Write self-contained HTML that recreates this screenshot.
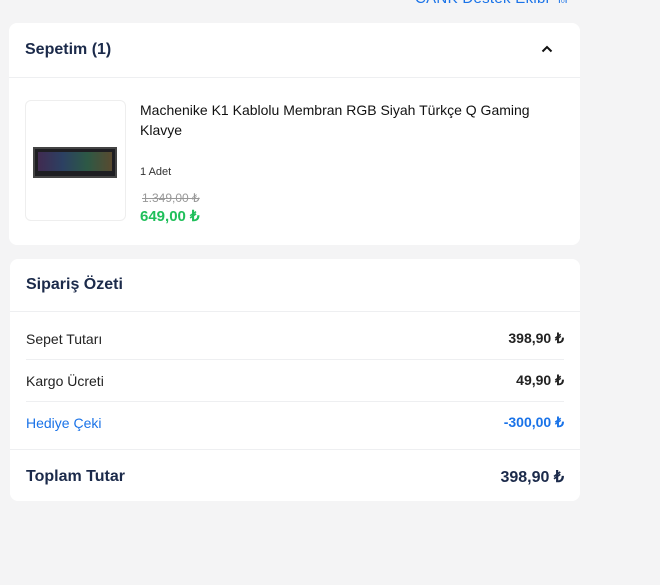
<!DOCTYPE html><html><head><meta charset="utf-8"><style>
body{margin:0;width:660px;height:585px;background:#f4f4f5;font-family:"Liberation Sans",sans-serif;position:relative;overflow:hidden}
.top{position:absolute;left:415px;top:-10px;color:#1a73e8;font-size:15px;letter-spacing:.3px}
.card{position:absolute;background:#fff;border-radius:8px}
.c1{left:9px;top:23px;width:571px;height:222px}
.c2{left:10px;top:259px;width:570px;height:242px}
.h{position:absolute;font-weight:bold;color:#1b2a4a}
.line{position:absolute;left:0;right:0;height:1px;background:#eeeff1}
.row{position:absolute;left:16px;right:16px;font-size:14px;color:#222;display:flex;justify-content:space-between;align-items:center}
</style></head><body>
<div class="top">CANK Destek Ekibi &nbsp;⍝</div>
<div class="card c1">
 <div class="h" style="left:16px;top:18px;font-size:16px">Sepetim (1)</div>
 <svg style="position:absolute;left:532px;top:22px" width="12" height="8" viewBox="0 0 12 8"><path d="M1.5 6.5 6 2 10.5 6.5" stroke="#111" stroke-width="2" fill="none"/></svg>
 <div class="line" style="top:54px"></div>
 <div style="position:absolute;left:16px;top:77px;width:99px;height:119px;border:1px solid #eee;border-radius:6px">
  <div style="position:absolute;left:7px;top:46px;width:84px;height:31px;background:#1e1e22;border:2px solid #444;box-sizing:border-box">
   <div style="position:absolute;left:3px;top:3px;right:3px;bottom:5px;background:linear-gradient(90deg,#6a3a8a,#3c6ab0,#3fa070,#a08040);opacity:.45"></div>
  </div>
 </div>
 <div style="position:absolute;left:131px;top:77px;font-size:14px;line-height:20px;color:#111;width:420px">Machenike K1 Kablolu Membran RGB Siyah Türkçe Q Gaming Klavye</div>
 <div style="position:absolute;left:131px;top:143px;font-size:11px;color:#333">1 Adet</div>
 <div style="position:absolute;left:133px;top:168px;font-size:12px;color:#999;text-decoration:line-through">1.349,00 ₺</div>
 <div style="position:absolute;left:131px;top:184px;font-size:15px;font-weight:bold;color:#1fbf5a">649,00 ₺</div>
</div>
<div class="card c2">
 <div class="h" style="left:16px;top:17px;font-size:16px">Sipariş Özeti</div>
 <div class="line" style="top:52px"></div>
 <div class="row" style="top:71px"><span>Sepet Tutarı</span><b>398,90 ₺</b></div>
 <div class="line" style="top:100px;left:16px;right:16px"></div>
 <div class="row" style="top:113px"><span>Kargo Ücreti</span><b>49,90 ₺</b></div>
 <div class="line" style="top:142px;left:16px;right:16px"></div>
 <div class="row" style="top:155px;color:#1a73e8"><span>Hediye Çeki</span><b>-300,00 ₺</b></div>
 <div class="line" style="top:190px"></div>
 <div class="row" style="top:208px;font-size:16px;color:#1b2a4a"><b>Toplam Tutar</b><b>398,90 ₺</b></div>
</div>
</body></html>
